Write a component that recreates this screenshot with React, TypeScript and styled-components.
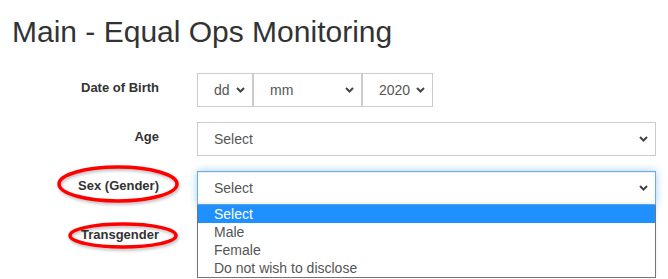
import styled, { createGlobalStyle } from "styled-components";

const GlobalStyle = createGlobalStyle`
  html, body {
    margin: 0;
    padding: 0;
    background: #ffffff;
    font-family: "Liberation Sans", Arial, sans-serif;
  }
`;

const Chevron = () => (
  <svg width="9" height="6" viewBox="0 0 9 6">
    <path
      d="M1 1 L4.5 4.5 L8 1"
      fill="none"
      stroke="#444"
      strokeWidth="2"
    />
  </svg>
);

const genderOptions = ["Select", "Male", "Female", "Do not wish to disclose"];

const App = () => {
  return (
    <Page>
      <GlobalStyle />
      <Title>Main - Equal Ops Monitoring</Title>

      <Form>
        <Label>Date of Birth</Label>
        <DateRow>
          <SelectBox width={56}>
            <span>dd</span>
            <Chevron />
          </SelectBox>
          <SelectBox width={109}>
            <span>mm</span>
            <Chevron />
          </SelectBox>
          <SelectBox width={71}>
            <span>2020</span>
            <Chevron />
          </SelectBox>
        </DateRow>

        <Label>Age</Label>
        <SelectBox>
          <span>Select</span>
          <Chevron />
        </SelectBox>

        <Label>Sex (Gender)</Label>
        <Field>
          <SelectBox focused>
            <span>Select</span>
            <Chevron />
          </SelectBox>
          <OptionList>
            {genderOptions.map((opt, i) => (
              <OptionItem key={opt} active={i === 0}>
                {opt}
              </OptionItem>
            ))}
          </OptionList>
        </Field>

        <Label>Transgender</Label>
        {/* covered by the open dropdown above */}
        <SelectBox />
      </Form>

      {/* red annotation rings drawn over the screenshot */}
      <Annotations width="668" height="279" viewBox="0 0 668 279">
        <defs>
          <filter id="ringShadow" x="-10%" y="-30%" width="120%" height="160%">
            <feDropShadow dx="1" dy="2" stdDeviation="1.5" floodColor="#000" floodOpacity="0.25" />
          </filter>
        </defs>
        <ellipse cx="118" cy="184" rx="59" ry="17" fill="none" stroke="#f00" strokeWidth="3.5" filter="url(#ringShadow)" />
        <ellipse cx="123" cy="235.5" rx="53" ry="11.5" fill="none" stroke="#f00" strokeWidth="3.5" filter="url(#ringShadow)" />
      </Annotations>
    </Page>
  );
};

const Page = styled.div`
  position: relative;
  width: 668px;
  height: 279px;
  overflow: hidden;
  box-sizing: border-box;
  padding: 15px 12px 0 0;
`;

const Title = styled.h1`
  margin: 0 0 25px 12px;
  font-size: 30px;
  line-height: 33px;
  font-weight: 400;
  color: #333;
`;

const Form = styled.div`
  display: grid;
  grid-template-columns: 159px 459px;
  column-gap: 38px;
  row-gap: 15px;
  grid-auto-rows: 34px;
`;

const Label = styled.div`
  text-align: right;
  padding-top: 7px;
  font-size: 13px;
  line-height: 15px;
  font-weight: 700;
  color: #333;
`;

const DateRow = styled.div`
  display: flex;
`;

const Field = styled.div`
  position: relative;
`;

const SelectBox = styled.div<{ width?: number; focused?: boolean }>`
  box-sizing: border-box;
  width: ${(p) => (p.width ? `${p.width}px` : "100%")};
  height: 34px;
  display: flex;
  align-items: center;
  justify-content: space-between;
  padding: 0 7px 0 16px;
  border: 1px solid ${(p) => (p.focused ? "#66afe9" : "#ccc")};
  background: #fff;
  font-size: 14px;
  color: #555;
  box-shadow: ${(p) =>
    p.focused
      ? "inset 0 1px 1px rgba(0,0,0,.075), 0 0 8px rgba(102,175,233,.6)"
      : "none"};

  svg {
    flex-shrink: 0;
  }
`;

const OptionList = styled.div`
  position: absolute;
  top: 100%;
  left: 0;
  right: 0;
  z-index: 2;
  background: #fff;
  border: 1px solid #767676;
  border-top: none;
  box-shadow: 0 -2px 3px rgba(0, 0, 0, 0.08);
`;

const OptionItem = styled.div<{ active?: boolean }>`
  height: 18px;
  line-height: 18px;
  padding-left: 16px;
  font-size: 14px;
  color: ${(p) => (p.active ? "#fff" : "#555")};
  background: ${(p) => (p.active ? "#1e90ff" : "transparent")};
  white-space: nowrap;
`;

const Annotations = styled.svg`
  position: absolute;
  left: 0;
  top: 0;
  pointer-events: none;
  z-index: 3;
`;

export default App;
